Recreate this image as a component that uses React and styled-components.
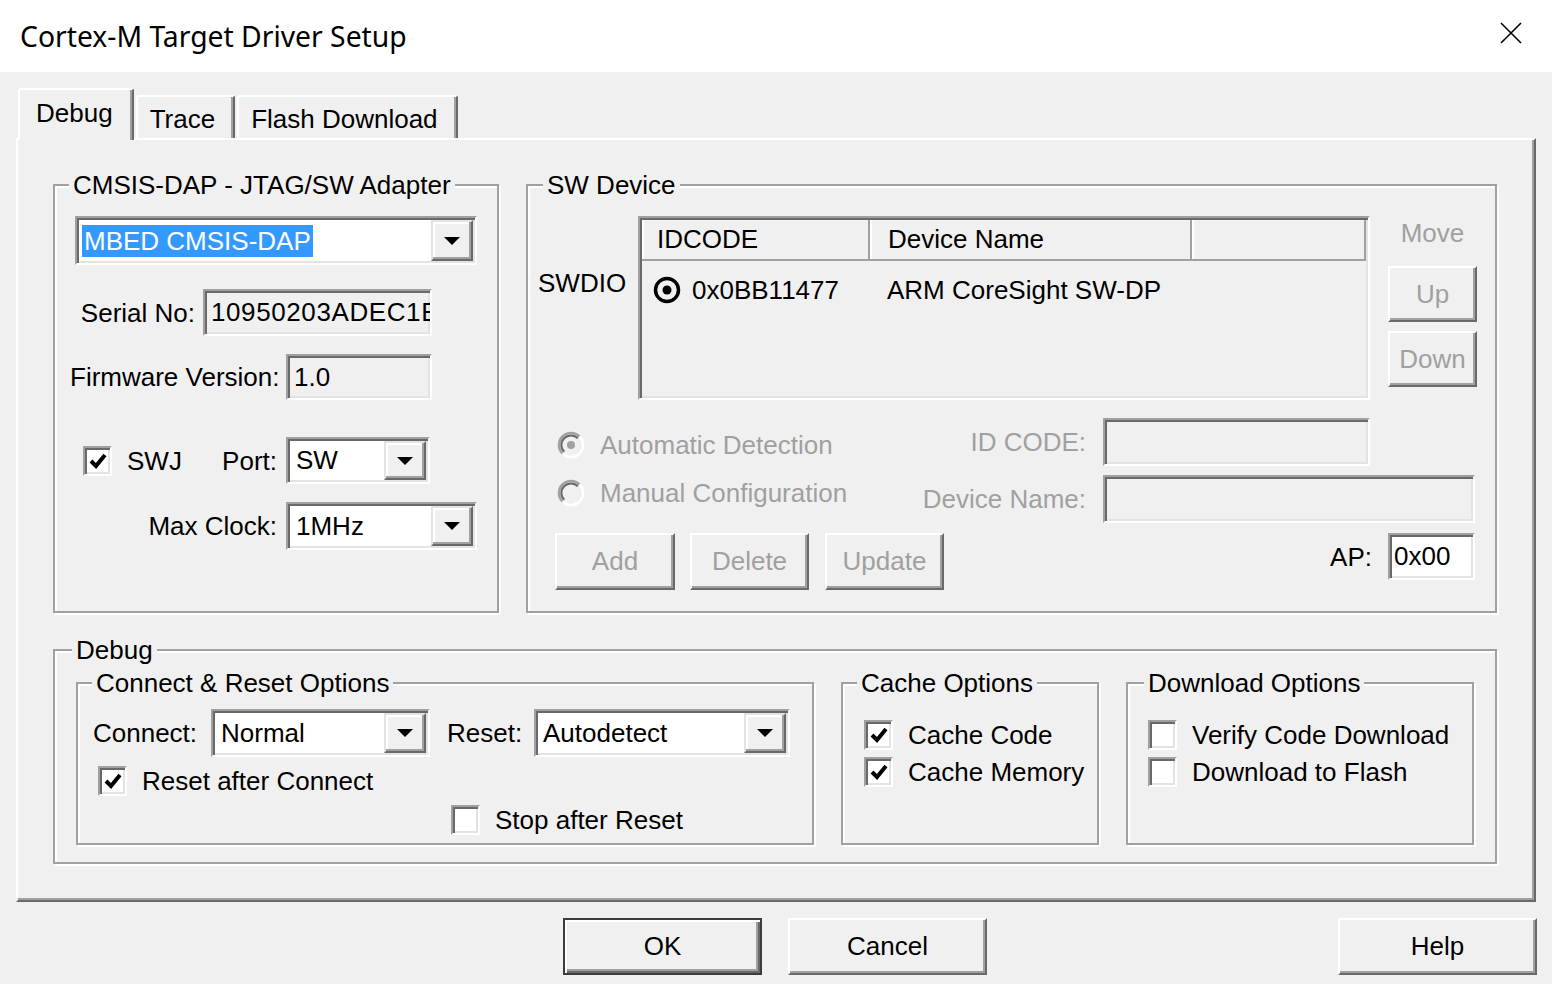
import React from 'react';
import styled, { createGlobalStyle, css } from 'styled-components';

const GlobalStyle = createGlobalStyle`
  html, body {
    margin: 0;
    padding: 0;
    background: #f0f0f0;
  }
  body {
    font-family: "Liberation Sans", Arial, sans-serif;
    font-size: 26px;
    color: #000;
  }
  * {
    box-sizing: border-box;
  }
`;

const Window = styled.div`
  width: 1552px;
  height: 984px;
  display: flex;
  flex-direction: column;
  background: #f0f0f0;
  overflow: hidden;
`;

const TitleBar = styled.div`
  height: 72px;
  flex: none;
  background: #fff;
  display: flex;
  align-items: center;
  justify-content: space-between;
  padding-left: 20px;
`;

const Title = styled.div`
  font-family: "Noto Sans", "Open Sans", sans-serif;
  font-size: 28.3px;
  color: #000;
`;

const CloseButton = styled.div`
  width: 82px;
  height: 72px;
  display: flex;
  align-items: center;
  justify-content: center;
  padding-bottom: 6px;
`;

const Content = styled.div`
  flex: 1;
  display: flex;
  flex-direction: column;
  padding: 16px 16px 0 16px;
`;

const TabStrip = styled.div`
  height: 50px;
  flex: none;
  display: flex;
  align-items: flex-end;
  gap: 2px;
  padding-left: 2px;
  position: relative;
  z-index: 1;
`;

const Tab = styled.div`
  height: ${p => (p.$active ? 52 : 43)}px;
  margin-bottom: ${p => (p.$active ? -2 : 0)}px;
  padding: ${p => (p.$active ? '8px 19px 0 16px' : '7px 18px 0 12px')};
  line-height: 30px;
  background: #f0f0f0;
  border-top: 2px solid #fff;
  border-left: 2px solid #fff;
  border-right: 2px solid #696969;
  box-shadow: inset -2px 0 0 #a0a0a0;
  border-top-left-radius: 3px;
  border-top-right-radius: 3px;
  white-space: nowrap;
`;

const Panel = styled.div`
  height: 764px;
  flex: none;
  border: 2px solid;
  border-color: #fff #696969 #696969 #fff;
  box-shadow: inset -2px -2px 0 #a0a0a0;
  padding: 30px 0 0 35px;
  display: flex;
  flex-direction: column;
`;

const TopRow = styled.div`
  display: flex;
  gap: 27px;
`;

const GroupBox = styled.fieldset`
  margin: 0;
  margin-top: ${p => p.$mt ?? 0}px;
  padding: 0;
  min-width: 0;
  flex: none;
  width: ${p => p.$w}px;
  height: ${p => p.$h}px;
  border: 2px solid #a0a0a0;
  box-shadow: inset 2px 2px 0 #fff, 2px 2px 0 #fff;
`;

const Legend = styled.legend`
  margin-left: ${p => p.$ml ?? 14}px;
  padding: 0 4px;
  height: 30px;
  line-height: 30px;
  background: #f0f0f0;
  white-space: nowrap;
`;

const GroupBody = styled.div`
  display: flex;
  flex-direction: ${p => (p.$row ? 'row' : 'column')};
  gap: ${p => p.$gap ?? 0}px;
  padding: ${p => p.$pad};
`;

const Row = styled.div`
  display: flex;
  align-items: ${p => (p.$top ? 'flex-start' : 'center')};
  width: ${p => (p.$w ? `${p.$w}px` : 'auto')};
  margin-top: ${p => p.$mt ?? 0}px;
  margin-left: ${p => p.$ml ?? 0}px;
  margin-right: ${p => p.$mr ?? 0}px;
`;

const Label = styled.div`
  flex: none;
  width: ${p => (p.$w ? `${p.$w}px` : 'auto')};
  margin-left: ${p => (p.$auto ? 'auto' : `${p.$ml ?? 0}px`)};
  margin-right: ${p => p.$mr ?? 0}px;
  text-align: ${p => (p.$right ? 'right' : 'left')};
  color: ${p => (p.$disabled ? '#a0a0a0' : '#000')};
  line-height: 30px;
  white-space: nowrap;
`;

const sunken = css`
  border: 2px solid;
  border-color: #a0a0a0 #fff #fff #a0a0a0;
  box-shadow: inset 2px 2px 0 #696969, inset -2px -2px 0 #e3e3e3;
`;

const raised = css`
  border: 2px solid;
  border-color: #fff #696969 #696969 #fff;
  box-shadow: inset -2px -2px 0 #a0a0a0;
`;

const Field = styled.div`
  ${sunken};
  flex: none;
  width: ${p => p.$w}px;
  height: ${p => p.$h ?? 48}px;
  margin-left: ${p => p.$ml ?? 0}px;
  margin-right: ${p => p.$mr ?? 0}px;
  display: flex;
  align-items: center;
  padding: 2px 2px 2px ${p => p.$pl ?? 6}px;
  background: ${p => (p.$white ? '#fff' : '#f0f0f0')};
  letter-spacing: ${p => p.$ls ?? 0}px;
  overflow: hidden;
  white-space: nowrap;
`;

const ComboBox = styled.div`
  ${sunken};
  flex: none;
  width: ${p => p.$w}px;
  height: ${p => p.$h ?? 48}px;
  margin-left: ${p => p.$ml ?? 0}px;
  display: flex;
  padding: 2px;
  background: #fff;
`;

const ComboValue = styled.div`
  flex: 1;
  display: flex;
  align-items: center;
  padding-left: ${p => p.$pl ?? 4}px;
  overflow: hidden;
  white-space: nowrap;
`;

const Highlight = styled.span`
  background: #3399ff;
  color: #fff;
  padding: 0 2px;
  line-height: 32px;
`;

const DropButton = styled.div`
  width: 42px;
  flex: none;
  display: flex;
  align-items: center;
  justify-content: center;
  background: #f0f0f0;
  border: 2px solid;
  border-color: #e3e3e3 #696969 #696969 #e3e3e3;
  box-shadow: inset -2px -2px 0 #a0a0a0, inset 2px 2px 0 #fff;
`;

const Button = styled.div`
  ${raised};
  flex: none;
  width: ${p => p.$w}px;
  height: ${p => p.$h ?? 57}px;
  margin-left: ${p => (p.$auto ? 'auto' : `${p.$ml ?? 0}px`)};
  margin-top: ${p => p.$mt ?? 0}px;
  display: flex;
  align-items: center;
  justify-content: center;
  background: #f0f0f0;
  color: ${p => (p.$disabled ? '#a0a0a0' : '#000')};
  ${p =>
    p.$default &&
    css`
      border-color: #3c3c3c;
      box-shadow: inset 2px 2px 0 #fff, inset -2px -2px 0 #696969, inset -4px -4px 0 #a0a0a0;
    `}
`;

const CheckBoxBox = styled.div`
  ${sunken};
  flex: none;
  width: 29px;
  height: 30px;
  background: #fff;
  display: flex;
  align-items: center;
  justify-content: center;
`;

const CheckRow = styled.div`
  display: flex;
  align-items: center;
  gap: 15px;
  margin-top: ${p => p.$mt ?? 0}px;
  margin-left: ${p => p.$ml ?? 0}px;
  line-height: 30px;
  white-space: nowrap;
`;

const ListBox = styled.div`
  ${sunken};
  flex: none;
  width: 732px;
  height: 184px;
  padding: 2px;
  background: #f0f0f0;
`;

const ListHeader = styled.div`
  display: flex;
`;

const HeaderCell = styled.div`
  flex: ${p => (p.$w ? 'none' : '1')};
  width: ${p => (p.$w ? `${p.$w}px` : 'auto')};
  height: 41px;
  padding: 4px 0 0 ${p => p.$pl ?? 15}px;
  line-height: 30px;
  border-right: 2px solid #a0a0a0;
  border-bottom: 2px solid #a0a0a0;
  box-shadow: inset 2px 0 0 #fff;
  white-space: nowrap;
`;

const ListRow = styled.div`
  display: flex;
  align-items: center;
  height: 40px;
  margin-top: 9px;
`;

const ListCell = styled.div`
  flex: none;
  width: ${p => p.$w}px;
  display: flex;
  align-items: center;
  gap: 10px;
  padding-left: ${p => p.$pl}px;
  white-space: nowrap;
`;

const SideLabel = styled.div`
  flex: none;
  width: 100px;
  padding-top: 52px;
  line-height: 30px;
`;

const MoveColumn = styled.div`
  flex: none;
  width: 89px;
  margin-left: 18px;
  display: flex;
  flex-direction: column;
`;

const MoveLabel = styled.div`
  text-align: center;
  margin-top: 2px;
  line-height: 30px;
  color: #a0a0a0;
`;

const Column = styled.div`
  display: flex;
  flex-direction: column;
  align-items: ${p => (p.$end ? 'flex-end' : 'flex-start')};
  flex: ${p => (p.$grow ? 1 : 'none')};
  min-width: 0;
  width: ${p => (p.$w ? `${p.$w}px` : 'auto')};
  margin-left: ${p => p.$ml ?? 0}px;
  padding-right: ${p => p.$pr ?? 0}px;
`;

const ButtonBar = styled.div`
  display: flex;
  margin-top: 16px;
  padding-left: 547px;
  margin-right: -1px;
`;

const RadioRow = styled.div`
  display: flex;
  align-items: center;
  height: 30px;
  margin-top: ${p => p.$mt ?? 0}px;
  padding-left: 2px;
  gap: 15px;
  color: #a0a0a0;
  white-space: nowrap;
`;

const Triangle = () => (
  <svg width="16" height="8" viewBox="0 0 16 8">
    <polygon points="0,0 16,0 8,8" fill="#000" />
  </svg>
);

const Combo = ({ w, h, ml, pl, children }) => (
  <ComboBox $w={w} $h={h} $ml={ml}>
    <ComboValue $pl={pl}>{children}</ComboValue>
    <DropButton>
      <Triangle />
    </DropButton>
  </ComboBox>
);

const CheckMark = () => (
  <svg width="18" height="16" viewBox="0 0 18 16">
    <path d="M2 8 L7 13 L16 2" stroke="#000" strokeWidth="4" fill="none" />
  </svg>
);

const CheckBox = ({ checked, label, mt, ml }) => (
  <CheckRow $mt={mt} $ml={ml}>
    <CheckBoxBox>{checked && <CheckMark />}</CheckBoxBox>
    <span>{label}</span>
  </CheckRow>
);

const ListRadio = () => (
  <svg width="30" height="30" viewBox="0 0 30 30">
    <circle cx="15" cy="15" r="11.5" fill="none" stroke="#000" strokeWidth="3.5" />
    <circle cx="15" cy="15" r="4.5" fill="#000" />
  </svg>
);

const DisabledRadio = ({ checked }) => (
  <svg width="28" height="28" viewBox="0 0 28 28">
    <circle cx="14" cy="14" r="12" fill="#f0f0f0" />
    <path d="M5.5 22.5 A12 12 0 0 1 22.5 5.5" stroke="#a0a0a0" strokeWidth="2.5" fill="none" />
    <path d="M7.2 20.8 A9.6 9.6 0 0 1 20.8 7.2" stroke="#696969" strokeWidth="2" fill="none" />
    <path d="M22.5 5.5 A12 12 0 0 1 5.5 22.5" stroke="#fff" strokeWidth="2.5" fill="none" />
    {checked && <circle cx="14" cy="14" r="4" fill="#a0a0a0" />}
  </svg>
);

const CloseIcon = () => (
  <svg width="22" height="22" viewBox="0 0 22 22">
    <path d="M1 1 L21 21 M21 1 L1 21" stroke="#000" strokeWidth="1.6" />
  </svg>
);

export default function App() {
  return (
    <>
      <GlobalStyle />
      <Window>
        <TitleBar>
          <Title>Cortex-M Target Driver Setup</Title>
          <CloseButton>
            <CloseIcon />
          </CloseButton>
        </TitleBar>
        <Content>
          <TabStrip>
            <Tab $active>Debug</Tab>
            <Tab>Trace</Tab>
            <Tab>Flash Download</Tab>
          </TabStrip>
          <Panel>
            <TopRow>
              <GroupBox $w={446} $h={443}>
                <Legend $ml={14}>CMSIS-DAP - JTAG/SW Adapter</Legend>
                <GroupBody $pad="0 0 0 15px">
                  <Row $mt={16} $ml={5}>
                    <Combo w={402} h={49} pl={3}>
                      <Highlight>MBED CMSIS-DAP</Highlight>
                    </Combo>
                  </Row>
                  <Row $mt={24}>
                    <Label $w={125} $right>Serial No:</Label>
                    <Field $w={229} $h={47} $ml={8} $pl={6} $ls={0.6}>10950203ADEC1E</Field>
                  </Row>
                  <Row $mt={18}>
                    <Label $w={207} $right>Firmware Version:</Label>
                    <Field $w={146} $h={46} $ml={9} $pl={6}>1.0</Field>
                  </Row>
                  <Row $mt={37}>
                    <Row $w={207}>
                      <CheckBox checked label="SWJ" ml={13} />
                      <Label $auto>Port:</Label>
                    </Row>
                    <Combo w={144} h={47} ml={9} pl={6}>SW</Combo>
                  </Row>
                  <Row $mt={18}>
                    <Label $w={207} $right>Max Clock:</Label>
                    <Combo w={191} h={48} ml={9} pl={6}>1MHz</Combo>
                  </Row>
                </GroupBody>
              </GroupBox>

              <GroupBox $w={971} $h={443}>
                <Legend $ml={15}>SW Device</Legend>
                <GroupBody $pad="0 18px 0 10px">
                  <Row $mt={16} $top>
                    <SideLabel>SWDIO</SideLabel>
                    <ListBox>
                      <ListHeader>
                        <HeaderCell $w={228} $pl={15}>IDCODE</HeaderCell>
                        <HeaderCell $w={322} $pl={18}>Device Name</HeaderCell>
                        <HeaderCell />
                      </ListHeader>
                      <ListRow>
                        <ListCell $w={228} $pl={10}>
                          <ListRadio />
                          <span>0x0BB11477</span>
                        </ListCell>
                        <ListCell $w={300} $pl={17}>ARM CoreSight SW-DP</ListCell>
                      </ListRow>
                    </ListBox>
                    <MoveColumn>
                      <MoveLabel>Move</MoveLabel>
                      <Button $w={89} $h={56} $mt={18} $disabled>Up</Button>
                      <Button $w={89} $h={56} $mt={9} $disabled>Down</Button>
                    </MoveColumn>
                  </Row>
                  <Row $mt={18} $top>
                    <Column $ml={17} $w={360}>
                      <RadioRow $mt={12}>
                        <DisabledRadio checked />
                        <span>Automatic Detection</span>
                      </RadioRow>
                      <RadioRow $mt={18}>
                        <DisabledRadio />
                        <span>Manual Configuration</span>
                      </RadioRow>
                      <Row $mt={25}>
                        <Button $w={120} $disabled>Add</Button>
                        <Button $w={119} $ml={15} $disabled>Delete</Button>
                        <Button $w={119} $ml={16} $disabled>Update</Button>
                      </Row>
                    </Column>
                    <Column $grow $end $pr={2}>
                      <Row>
                        <Label $disabled>ID CODE:</Label>
                        <Field $w={267} $h={48} $ml={17} $mr={105} />
                      </Row>
                      <Row $mt={9}>
                        <Label $disabled>Device Name:</Label>
                        <Field $w={372} $h={48} $ml={17} />
                      </Row>
                      <Row $mt={10}>
                        <Label>AP:</Label>
                        <Field $w={87} $h={47} $ml={16} $pl={4} $white>0x00</Field>
                      </Row>
                    </Column>
                  </Row>
                </GroupBody>
              </GroupBox>
            </TopRow>

            <GroupBox $w={1444} $h={229} $mt={22}>
              <Legend $ml={17}>Debug</Legend>
              <GroupBody $row $gap={27} $pad="3px 21px 0 21px">
                <GroupBox $w={738} $h={177}>
                  <Legend $ml={14}>Connect &amp; Reset Options</Legend>
                  <GroupBody $pad="0 0 0 15px">
                    <Row $mt={11}>
                      <Label $w={118}>Connect:</Label>
                      <Combo w={219} h={48} pl={6}>Normal</Combo>
                      <Label $w={87} $ml={17}>Reset:</Label>
                      <Combo w={256} h={48} pl={5}>Autodetect</Combo>
                    </Row>
                    <CheckBox checked label="Reset after Connect" mt={9} ml={5} />
                    <CheckBox label="Stop after Reset" mt={9} ml={358} />
                  </GroupBody>
                </GroupBox>
                <GroupBox $w={258} $h={177}>
                  <Legend $ml={14}>Cache Options</Legend>
                  <GroupBody $pad="0 0 0 21px">
                    <CheckBox checked label="Cache Code" mt={22} />
                    <CheckBox checked label="Cache Memory" mt={7} />
                  </GroupBody>
                </GroupBox>
                <GroupBox $w={348} $h={177}>
                  <Legend $ml={16}>Download Options</Legend>
                  <GroupBody $pad="0 0 0 20px">
                    <CheckBox label="Verify Code Download" mt={22} />
                    <CheckBox label="Download to Flash" mt={7} />
                  </GroupBody>
                </GroupBox>
              </GroupBody>
            </GroupBox>
          </Panel>
          <ButtonBar>
            <Button $w={199} $default>OK</Button>
            <Button $w={199} $ml={26}>Cancel</Button>
            <Button $w={199} $auto>Help</Button>
          </ButtonBar>
        </Content>
      </Window>
    </>
  );
}
